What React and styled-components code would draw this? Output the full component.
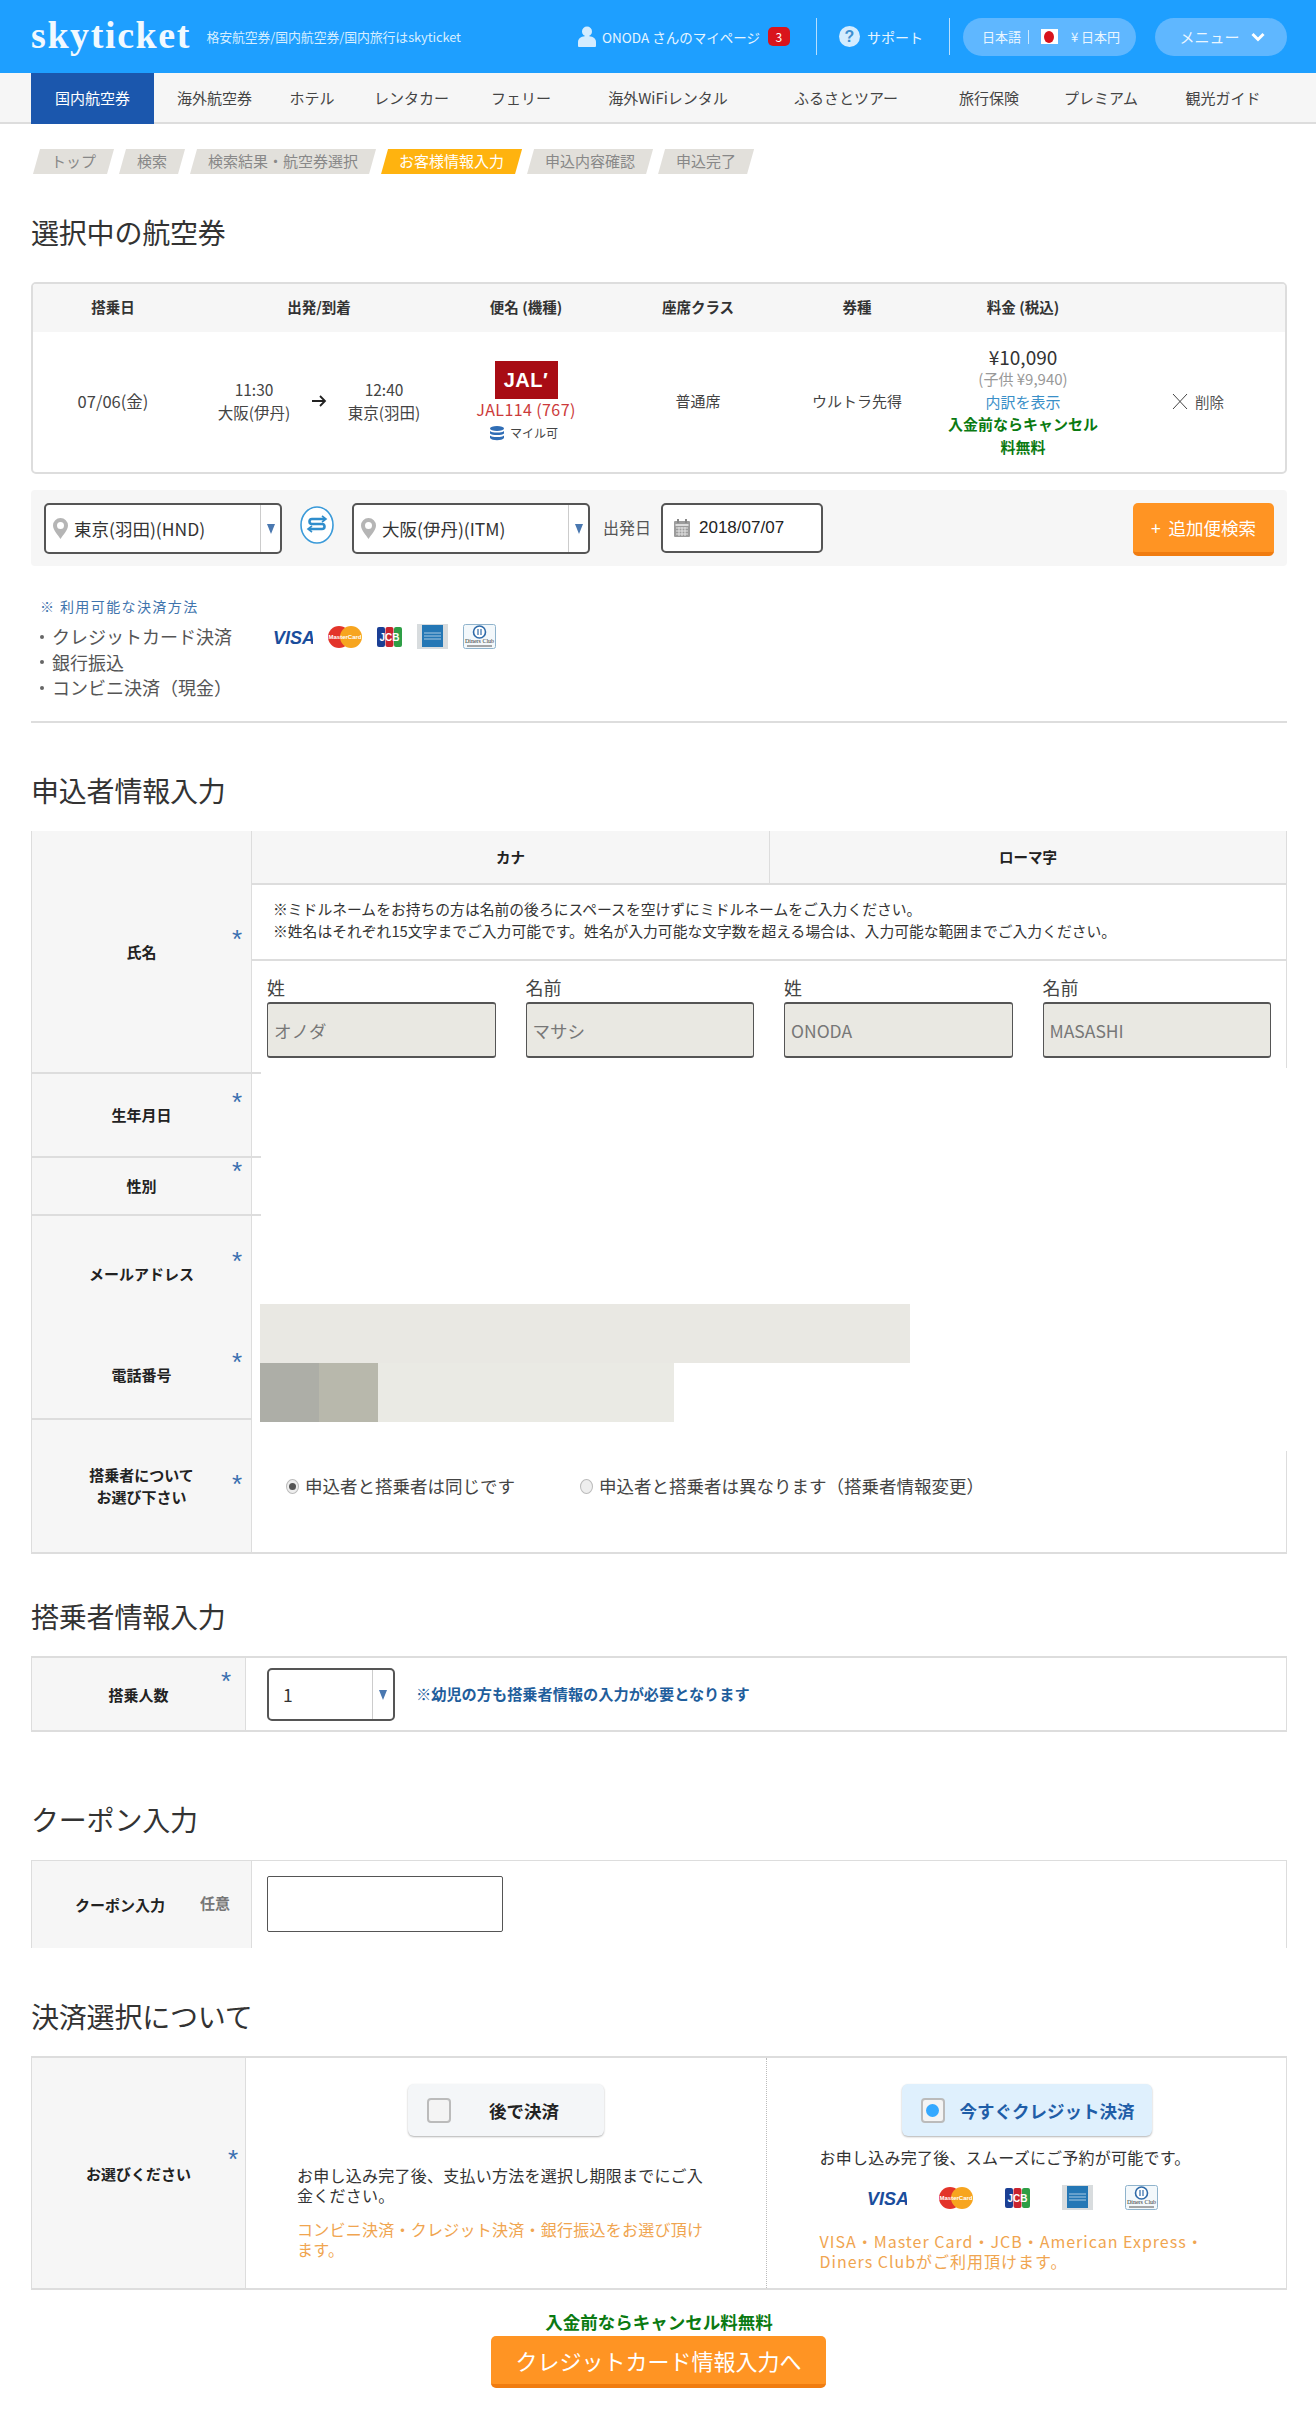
import React from "react";
import styled, { createGlobalStyle, css } from "styled-components";

const Global = createGlobalStyle`
  html, body { margin: 0; padding: 0; background: #fff; }
  body { font-family: "Noto Sans CJK JP", "Noto Sans", sans-serif; color: #333; font-size: 15px; }
  * { box-sizing: border-box; }
`;

const Page = styled.div`width: 1316px; height: 2433px; overflow: hidden;`;
const Header = styled.header`
  height: 73px; background: #1e9fff; color: #fff; display: flex; align-items: center; padding: 0 29px 0 31px;
`;
const Logo = styled.div`
  font: 700 38px/1 "Liberation Serif", serif; letter-spacing: 1.6px; color: #f1f9ff; width: 176px; margin-top: -4px; white-space: nowrap;
`;
const Tagline = styled.div`font-size: 12.9px; color: #d6eeff; width: 373px; white-space: nowrap; letter-spacing: -.1px;`;
const HeaderItem = styled.div`
  display: flex; align-items: center; gap: ${p => p.$gap || 6}px; font-size: ${p => p.$size || 14}px; color: #e6f5ff; white-space: nowrap;
`;
const Badge = styled.span`
  width: 22px; height: 19px; border-radius: 5px; background: #d9141c; color: #fff; font-size: 12px;
  display: inline-flex; align-items: center; justify-content: center; margin-left: 2px;
`;
const HeadDivider = styled.div`width: 1px; height: 37px; background: #b5dfff; margin: 0 ${p => p.$right}px 0 ${p => p.$left}px;`;
const Pill = styled.div`
  height: 38px; border-radius: 19px; background: #5fb7ff; display: flex; align-items: center; color: #eaf6ff;
  width: ${p => p.$w}px; padding-left: ${p => p.$pad}px; font-size: ${p => p.$size}px; white-space: nowrap; margin-left: ${p => p.$ml || 0}px;
`;
const PipeMark = styled.span`width: 1px; height: 14px; background: #cde9ff; margin: 0 12px 0 7px;`;
const Flag = styled.span`
  width: 17px; height: 15px; background: #fff; display: inline-flex; align-items: center; justify-content: center; margin-right: 13px;
  &::after { content: ""; width: 10px; height: 12px; border-radius: 50%; background: #d8131c; }
`;

const Nav = styled.nav`
  height: 51px; background: #f6f6f6; border-bottom: 2px solid #ddd; padding-left: 31px;
  display: grid; grid-template-columns: 123px 121px 74px 125px 94px 200px 156px 130px 94px 150px;
`;
const NavItem = styled.a`
  height: 51px; display: flex; align-items: center; justify-content: center; font-size: 15px; white-space: nowrap;
  color: ${p => p.$active ? "#fff" : "#444"}; background: ${p => p.$active ? "#1b57ad" : "transparent"};
  padding-bottom: 3px;
`;

const Crumbs = styled.div`display: flex; gap: 5px; margin: 25px 0 0 33px;`;
const Crumb = styled.div`
  height: 25px; padding: 0 18px 2px; display: flex; align-items: center; font-size: 15px; white-space: nowrap;
  clip-path: polygon(7px 0, 100% 0, calc(100% - 7px) 100%, 0 100%);
  background: ${p => p.$active ? "#ffb30f" : "#e2e0db"}; color: ${p => p.$active ? "#fff" : "#888"};
`;

const Main = styled.main`width: 1256px; margin-left: 31px;`;
const Heading = styled.h2`
  font-size: 28px; line-height: 40px; font-weight: 400; color: #333; margin: ${p => p.$top}px 0 ${p => p.$bottom}px;
  letter-spacing: -.2px;
`;

const summaryCols = css`display: grid; grid-template-columns: 164px 248px 166px 178px 140px 192px 1fr;`;
const SummaryBox = styled.section`border: 2px solid #ddd; border-radius: 5px; height: 192px; overflow: hidden;`;
const SummaryHead = styled.div`
  ${summaryCols}; height: 48px; background: #f6f6f6; align-items: center; text-align: center; font-weight: 700; font-size: 14.5px; color: #333; margin-left: -2px; padding-bottom: 3px;
`;
const SummaryBody = styled.div`${summaryCols}; height: 140px; align-items: center; text-align: center; font-size: 15px; color: #444; margin-left: -2px;`;
const PlainCell = styled.div`padding-bottom: 3px; font-size: ${p => p.$size || 15}px;`;
const Schedule = styled.div`
  display: grid; grid-template-columns: 1fr 30px 1fr; width: 230px; margin: 0 auto; align-items: center; line-height: 23px; font-size: 15.5px; padding-bottom: 3px;
`;
const Flight = styled.div`display: flex; flex-direction: column; align-items: center; padding-bottom: 1px;`;
const JalLogo = styled.div`
  width: 63px; height: 38px; background: #a80c14; color: #fff; display: flex; align-items: center; justify-content: center;
  font: 700 20px/1 "Liberation Sans", sans-serif; letter-spacing: .5px;
`;
const FlightNo = styled.div`color: #cc3a3a; font-size: 16px; line-height: 21px; letter-spacing: .4px;`;
const Mile = styled.div`display: flex; align-items: center; gap: 6px; font-size: 12px; color: #444; line-height: 18px; margin: 4px 0 0 -4px;`;
const Fare = styled.div`display: flex; flex-direction: column; align-items: center; line-height: 22.5px;`;
const Price = styled.div`font-size: 19px; color: #333;`;
const ChildPrice = styled.div`font-size: 15px; color: #999;`;
const BreakLink = styled.div`font-size: 15px; color: #3a8fc8;`;
const FreeNote = styled.div`font-weight: 700; font-size: 15px; color: #0b7a12; width: 156px;`;
const Remove = styled.div`display: flex; align-items: center; justify-content: center; gap: 7px; font-size: 14.5px; color: #555; padding-right: 8px; padding-bottom: 2px;`;

const SearchBar = styled.section`
  margin-top: 16px; height: 76px; background: #f6f6f6; border-radius: 4px; padding: 13px 13px 0 13px; display: flex; align-items: flex-start;
`;
const SelectBox = styled.div`
  width: ${p => p.$w}px; height: ${p => p.$h}px; background: #fff; border: 2px solid #555; border-radius: 5px; display: flex; align-items: center; flex: none;
  font-size: 17.5px; color: #333; padding-left: ${p => p.$pad}px; position: relative;
`;
const SelectText = styled.span`flex: 1; display: flex; align-items: center; gap: 6px; white-space: nowrap;`;
const SelectArrow = styled.span`
  width: ${p => p.$w}px; align-self: stretch; border-left: 1.5px solid #ccc; display: flex; align-items: center; justify-content: center;
  &::after { content: ""; border-left: 4.5px solid transparent; border-right: 4.5px solid transparent; border-top: 10px solid #4a78b0; }
`;
const Swap = styled.div`margin: 3px 18px 0 18px; flex: none; display: flex;`;
const DepartLabel = styled.div`font-size: 16px; color: #555; margin: 12px 8px 0 13px; width: 50px; white-space: nowrap;`;
const DateBox = styled.div`
  width: 162px; height: 50px; background: #fff; border: 2px solid #555; border-radius: 5px; display: flex; align-items: center; gap: 9px; padding-left: 11px;
  font: 17px "Liberation Sans", sans-serif; color: #222;
`;
const OrangeButton = styled.button`
  border: 0; border-bottom: 4px solid #f07c10; border-radius: 5px; background: #ff9423; color: #fff; font-family: inherit; padding: 0;
  display: flex; align-items: center; justify-content: center; white-space: nowrap;
  width: ${p => p.$w}px; height: ${p => p.$h}px; font-size: ${p => p.$size}px; margin: ${p => p.$margin};
`;

const PayNote = styled.div`margin: 30px 0 0 9px; font-size: 14px; line-height: 20px; color: #3f74ad; letter-spacing: 1.4px;`;
const PayList = styled.ul`margin: 8px 0 0 9px; padding: 0; list-style: none; font-size: 18px; line-height: 25.5px; color: #555;`;
const PayItem = styled.li`
  display: flex; align-items: center; white-space: nowrap;
  &::before { content: ""; width: 4px; height: 4px; border-radius: 50%; background: #666; margin-right: 8px; flex: none; }
`;
const Cards = styled.div`
  display: flex; align-items: center; gap: ${p => p.$gap}px; flex: none; height: 25px; margin: ${p => p.$margin};
`;
const Rule = styled.hr`border: 0; height: 2px; background: #ddd; margin: 20.5px 0 0;`;

const FormGrid = styled.section`
  display: grid; grid-template-columns: 221px 1035px; grid-template-rows: 243px 84px 58px 116px 88px 134px;
`;
const LabelCell = styled.div`
  position: relative; background: #f6f6f6; border-left: 1px solid #ddd; border-right: 1px solid #ddd;
  border-bottom: ${p => p.$open ? "0" : "2px solid #ddd"};
  display: flex; align-items: center; justify-content: center; text-align: center;
  font-weight: 700; font-size: 15px; line-height: 22px; color: #222;
`;
const Star = styled.span`
  position: absolute; top: ${p => p.$top}px; right: ${p => p.$right}px; font: 26px/1 "Liberation Sans", sans-serif; color: #3a6fb0;
`;
const NameCell = styled.div`display: flex; flex-direction: column; height: 243px;`;
const NameBody = styled.div`height: 237px; border-right: 1px solid #ddd;`;
const NameHead = styled.div`
  display: grid; grid-template-columns: 517px 1fr; height: 54px; background: #f6f6f6; border-bottom: 2px solid #ddd; font-weight: 700; font-size: 14.5px; color: #222;
`;
const NameHeadCell = styled.div`
  display: flex; align-items: center; justify-content: center; padding-bottom: 2px;
  & + & { border-left: 1px solid #ddd; }
`;
const NameNotes = styled.div`height: 76px; border-bottom: 2px solid #ddd; padding: 13px 0 0 21px; font-size: 14.8px; line-height: 22px; color: #333; white-space: nowrap;`;
const NameFields = styled.div`display: grid; grid-template-columns: repeat(4, 1fr); gap: 30px; padding: 16px 15px 0;`;
const FieldLabel = styled.div`font-size: 18px; line-height: 21px; height: 25px; color: #444;`;
const NameInput = styled.input`
  display: block; width: 100%; height: 56px; background: #e9e8e2; border: 1px solid #555; border-top-width: 2px; border-bottom-width: 2px; border-radius: 3px; padding: 0 6px;
  font: 17.5px "Noto Sans CJK JP", sans-serif; color: #777; outline: 0;
`;
const Stub = styled.div`width: 9px; height: 2px; background: #ddd; margin-top: ${p => p.$mt || 0}px;`;
const EmptyCell = styled.div`display: flex; flex-direction: column; justify-content: flex-end;`;
const ContactCell = styled.div`grid-row: 4 / span 2; grid-column: 2; padding: 88px 0 0 8px; height: 204px;`;
const MaskRow = styled.div`display: flex;`;
const Mask = styled.div`width: ${p => p.$w}px; height: 59px; background: ${p => p.$c};`;
const RadioCell = styled.div`
  margin-top: 31px; height: 103px; border-right: 1px solid #ddd; border-bottom: 2px solid #ddd; padding: 24px 0 0 34px;
  display: flex; align-items: flex-start; font-size: 17.5px; line-height: 22px; color: #444; grid-column: 2; white-space: nowrap;
`;
const RadioOption = styled.label`display: flex; align-items: center; gap: 6px; width: ${p => p.$w || "auto"};`;
const RadioDot = styled.span`
  width: 13px; height: 15px; border-radius: 50%; border: 1px solid #bbb; background: #eee; display: inline-flex; align-items: center; justify-content: center; flex: none;
  &::after { content: ""; width: 7px; height: 7px; border-radius: 50%; background: ${p => p.$on ? "#555" : "transparent"}; }
`;

const InfoTable = styled.section`
  display: grid; grid-template-columns: ${p => p.$label}px 1fr; height: ${p => p.$h}px;
  border: 1px solid #ddd; border-width: ${p => p.$border};
`;
const InfoLabel = styled.div`
  position: relative; background: #f6f6f6; border-right: 1px solid #ddd; display: flex; align-items: center; justify-content: ${p => p.$align || "center"};
  font-weight: 700; font-size: 15px; color: #222; padding-left: ${p => p.$pad || 0}px;
`;
const Optional = styled.span`color: #777; margin-left: 35px; margin-top: -4px;`;
const InfoBody = styled.div`display: flex; padding: ${p => p.$pad}; gap: 21px;`;
const PaxNote = styled.div`font-weight: 700; font-size: 15.2px; color: #1f5e9c; margin-top: 14px; line-height: 22px; white-space: nowrap;`;
const CouponInput = styled.input`
  width: 236px; height: 56px; border: 1px solid #555; border-radius: 2px; background: #fff; outline: 0; appearance: none;
`;

const PayGrid = styled.section`
  display: grid; grid-template-columns: 214px 1fr 1fr; height: 234px; border: 1px solid #ddd; border-width: 2px 1px 2px 1px;
`;
const PayOption = styled.div`
  display: flex; flex-direction: column; align-items: center; padding-top: 26px;
  & + & { border-left: 1px dotted #bbb; }
`;
const PayChoice = styled.div`
  width: ${p => p.$w}px; height: 52px; border-radius: 6px; display: flex; align-items: center; flex: none;
  background: ${p => p.$on ? "#dff0fd" : "#f4f6f8"}; box-shadow: 0 1px 2px rgba(0,0,0,.3);
  color: ${p => p.$on ? "#1f5ea8" : "#222"}; font-weight: 700; font-size: 17.5px; white-space: nowrap;
  padding-left: ${p => p.$pad}px; gap: ${p => p.$gap}px; margin-bottom: ${p => p.$mb}px;
`;
const CheckMark = styled.span`
  width: 24px; height: 25px; border: 2px solid #bbb; border-radius: 4px; background: #f4f4f4; display: inline-flex; align-items: center; justify-content: center; flex: none;
  &::after { content: ""; width: 13px; height: 13px; border-radius: 50%; background: ${p => p.$on ? "#36a9ff" : "transparent"}; }
`;
const PayText = styled.div`
  width: ${p => p.$w}px; font-size: 16px; line-height: 20px; letter-spacing: ${p => p.$ls || .25}px; color: ${p => p.$orange ? "#f0a550" : "#333"};
  margin-top: ${p => p.$mt || 0}px;
`;
const GreenNote = styled.div`margin-top: 20px; text-align: center; font-weight: 700; font-size: 17.5px; line-height: 24px; color: #0b7a12;`;

const ChevronSvg = styled.svg`margin-left: 12px;`;
const ArrowSvg = styled.svg`margin: 0 auto;`;

const PersonIcon = () => (
  <svg width="18" height="21" viewBox="0 0 18 21"><circle cx="9" cy="5.5" r="5" fill="#d4ecff" /><path d="M0 20v-4c0-4 4-6 9-6s9 2 9 6v4a1 1 0 0 1-1 1H1a1 1 0 0 1-1-1z" fill="#d4ecff" /></svg>
);
const HelpIcon = () => (
  <svg width="21" height="21" viewBox="0 0 21 21"><circle cx="10.5" cy="10.5" r="10.5" fill="#d4ecff" /><text x="10.5" y="16" textAnchor="middle" fontSize="16" fontWeight="700" fontFamily="Liberation Sans" fill="#3f8fcf">?</text></svg>
);
const Chevron = () => (
  <ChevronSvg width="14" height="10" viewBox="0 0 14 10"><path d="M1.5 2l5.5 5.5L12.5 2" fill="none" stroke="#fff" strokeWidth="3" /></ChevronSvg>
);
const ArrowIcon = () => (
  <ArrowSvg width="16" height="14" viewBox="0 0 16 14"><path d="M1 7h13M9 2l5 5-5 5" fill="none" stroke="#222" strokeWidth="1.8" /></ArrowSvg>
);
const CoinIcon = () => (
  <svg width="14" height="15" viewBox="0 0 14 15"><ellipse cx="7" cy="2.5" rx="7" ry="2.5" fill="#2f6db5" /><path d="M0 5c2 2 12 2 14 0v2.5c-2 2-12 2-14 0zM0 9.5c2 2 12 2 14 0V12c-2 3-12 3-14 0z" fill="#2f6db5" /></svg>
);
const CrossIcon = () => (
  <svg width="16" height="17" viewBox="0 0 16 17"><path d="M1 1l14 15M15 1L1 16" stroke="#444" strokeWidth="1" fill="none" /></svg>
);
const PinIcon = () => (
  <svg width="15" height="21" viewBox="0 0 15 21"><path fillRule="evenodd" d="M7.5 0A7.5 7.5 0 0 1 15 7.5C15 12 10 17 7.5 21 5 17 0 12 0 7.5A7.5 7.5 0 0 1 7.5 0zm0 4a3.5 3.5 0 1 0 0 7 3.5 3.5 0 0 0 0-7z" fill="#b5b5b5" /></svg>
);
const SwapIcon = () => (
  <svg width="34" height="38" viewBox="0 0 34 38">
    <ellipse cx="17" cy="19" rx="16" ry="18" fill="#fff" stroke="#3a9ad9" strokeWidth="1.6" />
    <path d="M25 13H12a2.5 2.5 0 0 0 0 5h10a2.5 2.5 0 0 1 0 5H9" fill="none" stroke="#2f8dcc" strokeWidth="2.6" />
    <path d="M22 10l4 3-4 3M12 20l-4 3 4 3" fill="none" stroke="#2f8dcc" strokeWidth="1.6" />
  </svg>
);
const CalendarIcon = () => (
  <svg width="16" height="18" viewBox="0 0 16 18">
    <rect y="2" width="16" height="16" rx="1" fill="#9c9c9c" />
    <rect x="3" width="2" height="4" fill="#888" /><rect x="11" width="2" height="4" fill="#888" />
    <rect x="1.5" y="5" width="13" height="2" fill="#ddd" />
    <path d="M2 9h12M2 12h12M2 15h12M5 8v9M8 8v9M11 8v9" stroke="#e4e4e4" strokeWidth="1" />
  </svg>
);
const VisaLogo = () => (
  <svg width="40" height="20" viewBox="0 0 40 20">
    <path d="M0 4c2 0 4 1 5 3L3 4z" fill="#e8a33a" />
    <text x="21" y="17" textAnchor="middle" fontSize="18" fontWeight="700" fontStyle="italic" fontFamily="Liberation Sans" fill="#1a4d9c">VISA</text>
  </svg>
);
const MasterLogo = () => (
  <svg width="34" height="22" viewBox="0 0 34 22">
    <circle cx="11" cy="11" r="11" fill="#e3342a" /><circle cx="23" cy="11" r="11" fill="#f7a51f" />
    <text x="17" y="13" textAnchor="middle" fontSize="6" fontWeight="700" fontFamily="Liberation Sans" fill="#fff">MasterCard</text>
  </svg>
);
const JcbLogo = () => (
  <svg width="25" height="20" viewBox="0 0 25 20">
    <rect width="8" height="20" rx="2" fill="#1b3f94" /><rect x="8.5" width="8" height="20" rx="2" fill="#c9232e" /><rect x="17" width="8" height="20" rx="2" fill="#2e9e46" />
    <text x="12.5" y="14" textAnchor="middle" fontSize="10" fontWeight="700" fontFamily="Liberation Sans" fill="#fff">JCB</text>
  </svg>
);
const AmexLogo = () => (
  <svg width="31" height="25" viewBox="0 0 31 25">
    <rect width="31" height="25" fill="#d8dcde" /><rect x="5" y="1" width="21" height="22" fill="#2477b5" />
    <path d="M7 9h17M7 12h17M7 15h17" stroke="#a9cbe3" strokeWidth="1" />
  </svg>
);
const DinersLogo = () => (
  <svg width="33" height="25" viewBox="0 0 33 25">
    <rect x=".5" y=".5" width="32" height="24" rx="2" fill="#f3f8fb" stroke="#8fb3cc" />
    <circle cx="16.5" cy="8" r="6" fill="#fff" stroke="#2f6aa8" strokeWidth="1.6" />
    <path d="M15 5v6M18 5v6" stroke="#2f6aa8" strokeWidth="1.2" />
    <text x="16.5" y="19" textAnchor="middle" fontSize="6" fontFamily="Liberation Serif" fill="#333">Diners Club</text>
    <path d="M4 22h25" stroke="#555" strokeWidth="1" />
  </svg>
);
const CardSet = () => (<><VisaLogo /><MasterLogo /><JcbLogo /><AmexLogo /><DinersLogo /></>);

const navItems = ["国内航空券", "海外航空券", "ホテル", "レンタカー", "フェリー", "海外WiFiレンタル", "ふるさとツアー", "旅行保険", "プレミアム", "観光ガイド"];
const crumbs = ["トップ", "検索", "検索結果・航空券選択", "お客様情報入力", "申込内容確認", "申込完了"];
const heads = ["搭乗日", "出発/到着", "便名 (機種)", "座席クラス", "券種", "料金 (税込)", ""];
const nameFields = [["姓", "オノダ"], ["名前", "マサシ"], ["姓", "ONODA"], ["名前", "MASASHI"]];

export default function App() {
  return (
    <Page>
      <Global />
      <Header>
        <Logo>skyticket</Logo>
        <Tagline>格安航空券/国内航空券/国内旅行はskyticket</Tagline>
        <HeaderItem $size={13.5}><PersonIcon />ONODA さんのマイページ<Badge>3</Badge></HeaderItem>
        <HeadDivider $left={26} $right={22} />
        <HeaderItem $gap={7}><HelpIcon />サポート</HeaderItem>
        <HeadDivider $left={26} $right={13} />
        <Pill $w={174} $pad={19} $size={13}>日本語<PipeMark /><Flag />¥ 日本円</Pill>
        <Pill $w={132} $pad={24} $size={15} $ml={19}>メニュー<Chevron /></Pill>
      </Header>
      <Nav>
        {navItems.map((n, i) => <NavItem key={n} $active={i === 0}>{n}</NavItem>)}
      </Nav>
      <Crumbs>
        {crumbs.map((c, i) => <Crumb key={c} $active={i === 3}>{c}</Crumb>)}
      </Crumbs>
      <Main>
        <Heading $top={38} $bottom={30}>選択中の航空券</Heading>
        <SummaryBox>
          <SummaryHead>{heads.map((h, i) => <div key={i}>{h}</div>)}</SummaryHead>
          <SummaryBody>
            <PlainCell $size={16.5}>07/06(金)</PlainCell>
            <Schedule>
              <div>11:30<br />大阪(伊丹)</div>
              <ArrowIcon />
              <div>12:40<br />東京(羽田)</div>
            </Schedule>
            <Flight>
              <JalLogo>JAL′</JalLogo>
              <FlightNo>JAL114 (767)</FlightNo>
              <Mile><CoinIcon />マイル可</Mile>
            </Flight>
            <PlainCell>普通席</PlainCell>
            <PlainCell>ウルトラ先得</PlainCell>
            <Fare>
              <Price>¥10,090</Price>
              <ChildPrice>(子供 ¥9,940)</ChildPrice>
              <BreakLink>内訳を表示</BreakLink>
              <FreeNote>入金前ならキャンセル料無料</FreeNote>
            </Fare>
            <Remove><CrossIcon />削除</Remove>
          </SummaryBody>
        </SummaryBox>
        <SearchBar>
          <SelectBox $w={238} $h={51} $pad={7}>
            <SelectText><PinIcon />東京(羽田)(HND)</SelectText><SelectArrow $w={20} />
          </SelectBox>
          <Swap><SwapIcon /></Swap>
          <SelectBox $w={238} $h={51} $pad={7}>
            <SelectText><PinIcon />大阪(伊丹)(ITM)</SelectText><SelectArrow $w={20} />
          </SelectBox>
          <DepartLabel>出発日</DepartLabel>
          <DateBox><CalendarIcon />2018/07/07</DateBox>
          <OrangeButton $w={141} $h={53} $size={17.5} $margin="0 0 0 auto">+&nbsp;&nbsp;追加便検索</OrangeButton>
        </SearchBar>
        <PayNote>※ 利用可能な決済方法</PayNote>
        <PayList>
          <PayItem>クレジットカード決済<Cards $gap={15} $margin="0 0 0 41px"><CardSet /></Cards></PayItem>
          <PayItem>銀行振込</PayItem>
          <PayItem>コンビニ決済（現金）</PayItem>
        </PayList>
        <Rule />

        <Heading $top={47} $bottom={21}>申込者情報入力</Heading>
        <FormGrid>
          <LabelCell>氏名<Star $top={95} $right={9}>*</Star></LabelCell>
          <NameCell>
            <NameBody>
              <NameHead>
                <NameHeadCell>カナ</NameHeadCell>
                <NameHeadCell>ローマ字</NameHeadCell>
              </NameHead>
              <NameNotes>
                ※ミドルネームをお持ちの方は名前の後ろにスペースを空けずにミドルネームをご入力ください。<br />
                ※姓名はそれぞれ15文字までご入力可能です。姓名が入力可能な文字数を超える場合は、入力可能な範囲までご入力ください。
              </NameNotes>
              <NameFields>
                {nameFields.map(([l, v]) => (
                  <div key={v}>
                    <FieldLabel>{l}</FieldLabel>
                    <NameInput readOnly defaultValue={v} />
                  </div>
                ))}
              </NameFields>
            </NameBody>
            <Stub $mt={4} />
          </NameCell>
          <LabelCell>生年月日<Star $top={15} $right={9}>*</Star></LabelCell>
          <EmptyCell><Stub /></EmptyCell>
          <LabelCell>性別<Star $top={0} $right={9}>*</Star></LabelCell>
          <EmptyCell><Stub /></EmptyCell>
          <LabelCell $open>メールアドレス<Star $top={32} $right={9}>*</Star></LabelCell>
          <ContactCell>
            <Mask $w={650} $c="#e9e8e3" />
            <MaskRow>
              <Mask $w={59} $c="#adaea7" />
              <Mask $w={59} $c="#b8b8ac" />
              <Mask $w={296} $c="#eaeae4" />
            </MaskRow>
          </ContactCell>
          <LabelCell>電話番号<Star $top={17} $right={9}>*</Star></LabelCell>
          <LabelCell>搭乗者について<br />お選び下さい<Star $top={51} $right={9}>*</Star></LabelCell>
          <RadioCell>
            <RadioOption $w="294px"><RadioDot $on />申込者と搭乗者は同じです</RadioOption>
            <RadioOption><RadioDot />申込者と搭乗者は異なります（搭乗者情報変更）</RadioOption>
          </RadioCell>
        </FormGrid>

        <Heading $top={42} $bottom={20}>搭乗者情報入力</Heading>
        <InfoTable $label={214} $h={76} $border="2px 1px 2px 1px">
          <InfoLabel>搭乗人数<Star $top={10} $right={14}>*</Star></InfoLabel>
          <InfoBody $pad="10px 0 0 21px">
            <SelectBox $w={128} $h={53} $pad={14}>
              <SelectText>1</SelectText><SelectArrow $w={21} />
            </SelectBox>
            <PaxNote>※幼児の方も搭乗者情報の入力が必要となります</PaxNote>
          </InfoBody>
        </InfoTable>

        <Heading $top={67} $bottom={21}>クーポン入力</Heading>
        <InfoTable $label={220} $h={88} $border="1px 1px 0 1px">
          <InfoLabel $align="flex-start" $pad={43}>クーポン入力<Optional>任意</Optional></InfoLabel>
          <InfoBody $pad="15px 0 0 15px">
            <CouponInput />
          </InfoBody>
        </InfoTable>

        <Heading $top={48} $bottom={20}>決済選択について</Heading>
        <PayGrid>
          <InfoLabel>お選びください<Star $top={88} $right={7}>*</Star></InfoLabel>
          <PayOption>
            <PayChoice $w={196} $pad={19} $gap={38} $mb={29}><CheckMark />後で決済</PayChoice>
            <PayText $w={418}>お申し込み完了後、支払い方法を選択し期限までにご入金ください。</PayText>
            <PayText $w={418} $mt={14} $orange>コンビニ決済・クレジット決済・銀行振込をお選び頂けます。</PayText>
          </PayOption>
          <PayOption>
            <PayChoice $w={250} $pad={19} $gap={15} $mb={11} $on><CheckMark $on />今すぐクレジット決済</PayChoice>
            <PayText $w={414}>お申し込み完了後、スムーズにご予約が可能です。</PayText>
            <Cards $gap={32} $margin="18px 28px 21px 0"><CardSet /></Cards>
            <PayText $w={414} $orange $ls={1}>VISA・Master Card・JCB・American Express・<br />Diners Clubがご利用頂けます。</PayText>
          </PayOption>
        </PayGrid>
        <GreenNote>入金前ならキャンセル料無料</GreenNote>
        <OrangeButton $w={335} $h={52} $size={22} $margin="2px 0 0 460px">クレジットカード情報入力へ</OrangeButton>
      </Main>
    </Page>
  );
}
